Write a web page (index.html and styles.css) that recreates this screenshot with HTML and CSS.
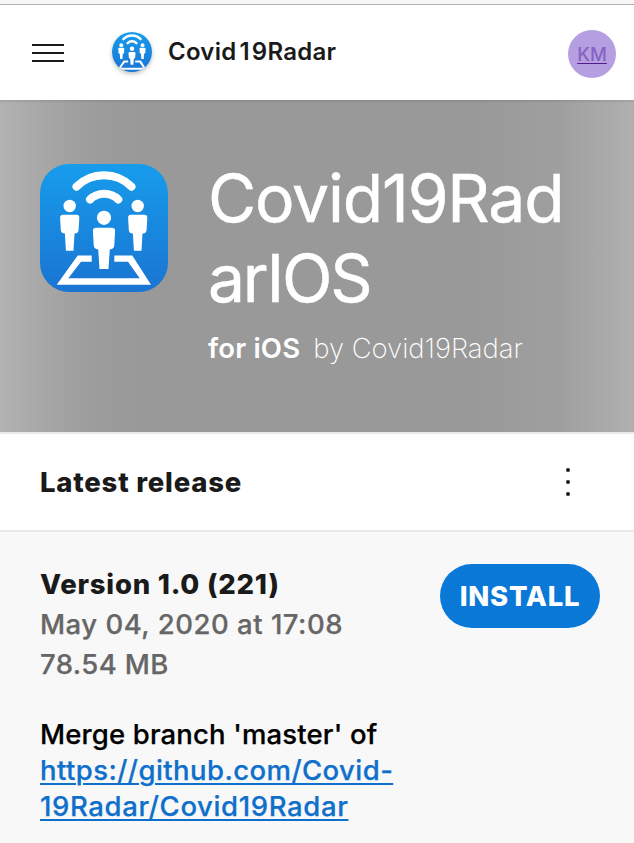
FILE: index.html
```html
<!DOCTYPE html>
<html lang="en">
<head>
<meta charset="utf-8">
<title>Covid19Radar</title>
<link rel="stylesheet" href="styles.css">
</head>
<body>
<svg class="defs" width="0" height="0" aria-hidden="true">
  <defs>
    <linearGradient id="sky" x1="0" y1="0" x2="0" y2="1"><stop offset="0" stop-color="#179cec"/><stop offset="1" stop-color="#1a74d2"/></linearGradient>
    <symbol id="radar" viewBox="0 0 128 128">
      <rect width="128" height="128" fill="url(#sky)"/>
      <g fill="none" stroke="#fff" stroke-width="8" stroke-linecap="round">
        <path d="M36.5 22.7A39 39 0 0 1 91.5 22.7"/>
        <path d="M50 35.5A20.5 20.5 0 0 1 78.3 35.5"/>
      </g>
      <g fill="#fff">
        <circle cx="29.7" cy="42" r="6.2"/><circle cx="97.7" cy="42" r="6.2"/><circle cx="64" cy="53.8" r="7.1"/>
        <path id="person" d="M23 50.7H36.4Q39.4 50.7 39.3 53.7L38.6 66Q38.3 69.5 34.5 69.6L33.5 86.7H25.9L24.9 69.6Q21.1 69.5 20.8 66L20.1 53.7Q20 50.7 23 50.7Z"/>
        <use href="#person" x="68"/>
        <path d="M56.2 63.8H71.8Q75.2 63.8 75.1 67.2L74.3 81Q74 85.3 69.8 85.4L68.5 105H59.5L58.2 85.4Q54 85.3 53.7 81L52.9 67.2Q52.8 63.8 56.2 63.8Z"/>
        <path d="M51.7 91.5V97.7H41L28.3 114.3H99.7L88 97.7H74.3V91.5H92.3L111 120.7H16.7L37.7 91.5Z"/>
      </g>
    </symbol>
  </defs>
</svg>
<div class="browser-edge"></div>
<header class="topbar">
  <div class="menu"><i></i><i></i><i></i></div>
  <svg class="org-logo"><use href="#radar"/></svg>
  <span class="org-name">Covid<span class="one">1</span>9Radar</span>
  <a class="avatar">KM</a>
</header>
<section class="hero">
  <svg class="app-icon"><use href="#radar"/></svg>
  <div class="app-info">
    <h1><span class="t1">Covid19Rad</span><br><span class="t2">arIOS</span></h1>
    <p class="byline"><b>for iOS</b><span>by Covid19Radar</span></p>
  </div>
</section>
<section class="release-head">
  <h2>Latest release</h2>
  <div class="more"><i></i><i></i><i></i></div>
</section>
<main class="release">
  <div class="summary">
    <div class="meta">
      <h3>Version 1.0 (221)</h3>
      <div><span class="date">May 04, 2020 at 17:08</span></div>
      <div><span class="size">78.54 MB</span></div>
    </div>
    <button class="install"><span>INSTALL</span></button>
  </div>
  <p class="notes"><span class="n1">Merge branch 'master' of</span><br><a><span class="n2">https://github.com/Covid-</span><br><span class="n3">19Radar/Covid19Radar</span></a></p>
</main>
</body>
</html>
```
FILE: styles.css
```css
* { box-sizing: border-box; }
body { margin: 0; height: 843px; overflow: hidden; background: #f8f8f8; color: #1a1a1a; font-family: Inter, sans-serif; font-size: 27.5px; }
h1, h2, h3, p { margin: 0; }
.defs { display: block; }
.browser-edge { height: 5px; background: #f7f7f7; border-bottom: 1px solid #b0b0b0; }
.topbar { height: 95px; display: flex; align-items: center; padding: 0 18px 0 32px; background: #fff; }
.menu { width: 32px; display: grid; gap: 6px; }
.menu i { height: 2px; background: #1a1a1a; }
.org-logo { width: 40px; height: 40px; margin-left: 48px; margin-top: -1px; border-radius: 50%; box-shadow: 0 2px 4px rgba(0,0,0,.25); }
.org-name { margin-left: 16px; margin-top: -2px; font-size: 24px; font-weight: 600; letter-spacing: .25px; }
.one { padding: 0 2px 0 3px; }
.avatar { margin-left: auto; margin-top: 3px; width: 48px; height: 48px; border-radius: 50%; background: #b59fe0; color: #8563c5; font-size: 18.5px; font-weight: 500; line-height: 48px; text-align: center; text-decoration: underline; text-decoration-color: #551a8b; text-decoration-thickness: 1px; text-underline-offset: 2px; }
.hero { height: 332px; display: flex; gap: 40px; padding: 64px 40px 0; background: linear-gradient(rgba(0,0,0,.1), transparent 3px), linear-gradient(90deg, #b2b2b2 0, #a3a3a3 60px, #9b9b9b 105px, #999 145px, #999 475px, #9f9f9f 560px, #b0b0b0 100%); color: #fff; }
.app-icon { width: 128px; height: 128px; border-radius: 29px; flex: none; }
.app-info { margin-top: -6px; }
h1 { font-size: 66px; line-height: 80px; font-weight: 400; white-space: nowrap; -webkit-text-stroke: .5px #fff; }
.t1 { letter-spacing: -1.2px; }
.t2 { letter-spacing: -2.2px; }
.byline { margin-top: 14px; line-height: 32px; white-space: nowrap; }
.byline b { font-weight: 600; margin-right: 13px; letter-spacing: .2px; }
.byline span { font-weight: 200; letter-spacing: -.05px; }
.release-head { height: 100px; display: flex; align-items: center; justify-content: space-between; padding: 0 64px 0 40px; background: #fff; border-top: 2px solid #e9e9e9; border-bottom: 2px solid #e9e9e9; }
h2 { font-size: 27.5px; font-weight: 800; letter-spacing: .78px; }
.more { display: grid; gap: 8px; }
.more i { width: 4px; height: 4px; border-radius: 50%; background: #1a1a1a; }
.release { padding: 32px 34px 0 40px; }
.summary { display: flex; justify-content: space-between; }
.meta { line-height: 40px; color: #666; font-weight: 500; white-space: nowrap; }
h3 { font-size: 27.5px; font-weight: 800; color: #1a1a1a; letter-spacing: .78px; }
.date { letter-spacing: .51px; }
.size { letter-spacing: .4px; }
.date, .size, .notes { -webkit-text-stroke-width: .25px; }
.install { width: 160px; height: 64px; padding: 0; border: 0; border-radius: 32px; background: #0a78d6; color: #fff; font: 800 27.5px Inter, sans-serif; letter-spacing: .75px; }
.notes { margin-top: 32px; line-height: 36px; color: #000; font-weight: 500; white-space: nowrap; }
.n1 { letter-spacing: .15px; }
.n2 { letter-spacing: .43px; }
.n3 { letter-spacing: .63px; }
.notes a { color: #0f70cc; text-decoration: underline; text-decoration-thickness: 2px; text-underline-offset: 3px; }
```
